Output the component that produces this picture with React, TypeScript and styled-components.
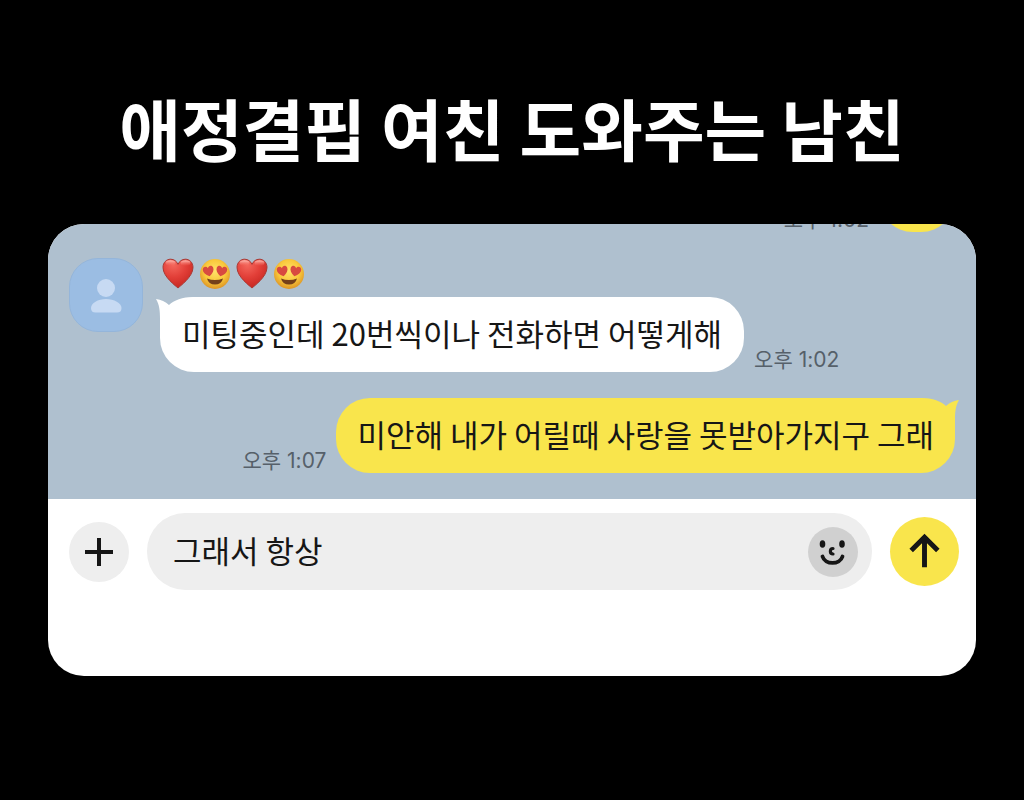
import React, { useState } from 'react';
import styled, { createGlobalStyle } from 'styled-components';

const GlobalStyle = createGlobalStyle`
  * { box-sizing: border-box; }
  body {
    margin: 0;
    background: #000;
    color: #161616;
    font-family: "Noto Sans CJK KR", sans-serif;
  }
`;

const Page = styled.main`
  padding: 79px 48px 124px;
`;

const Title = styled.h1`
  margin: 0 0 49px;
  color: #fff;
  font-size: 67px;
  font-weight: 600;
  line-height: 96px;
  text-align: center;
`;

const Phone = styled.section`
  overflow: hidden;
  border-radius: 36px;
  background: #fff;
`;

const Chat = styled.div`
  display: flex;
  flex-direction: column;
  gap: 26px;
  padding: 0 21px 26px;
  overflow: hidden;
  background: #afc0cf;
`;

const Row = styled.div<{ $mine?: boolean; $cut?: boolean }>`
  display: flex;
  align-items: flex-start;
  justify-content: ${(p) => (p.$mine ? 'flex-end' : 'flex-start')};
  gap: 17px;
  margin-top: ${(p) => (p.$cut ? '-67px' : '0')};
`;

const Avatar = styled.div`
  flex: none;
  width: 74px;
  height: 74px;
  border: 1px solid #94b5da;
  border-radius: 29px;
  background: #9bbde3;
`;

const Content = styled.div`
  display: flex;
  flex-direction: column;
  gap: 7px;
`;

const Name = styled.div`
  display: flex;
  gap: 5px;
  height: 32px;
  padding-left: 2px;
`;

const Line = styled.div`
  display: flex;
  align-items: flex-end;
  gap: 10px;
`;

const Bubble = styled.div<{ $mine?: boolean }>`
  position: relative;
  isolation: isolate;
  min-width: 76px;
  height: 75px;
  padding: 0 ${(p) => (p.$mine ? '21px' : '22px')};
  border-radius: 34px;
  background: ${(p) => (p.$mine ? '#f9e54c' : '#fff')};
  font-size: 31px;
  line-height: 72px;
  white-space: nowrap;
`;

const Tail = styled.svg<{ $mine?: boolean }>`
  position: absolute;
  z-index: -1;
  top: 0;
  ${(p) => (p.$mine ? 'right: -5px; transform: scaleX(-1);' : 'left: -5px;')}
  width: 40px;
  height: 36px;
`;

const Time = styled.time`
  color: #56606a;
  font-family: Inter, "Noto Sans CJK KR", sans-serif;
  font-size: 21px;
  line-height: 24px;
  white-space: nowrap;
`;

const Composer = styled.form`
  display: flex;
  align-items: center;
  gap: 18px;
  padding: 14px 17px 86px 21px;
`;

const RoundButton = styled.button<{ $size: number; $color: string }>`
  display: flex;
  flex: none;
  align-items: center;
  justify-content: center;
  width: ${(p) => p.$size}px;
  height: ${(p) => p.$size}px;
  padding: 0;
  border: 0;
  border-radius: 50%;
  background: ${(p) => p.$color};
`;

const Field = styled.div`
  display: flex;
  flex: 1;
  align-items: center;
  min-width: 0;
  height: 77px;
  padding: 0 14px 0 26px;
  border-radius: 38px;
  background: #eee;
`;

const TextInput = styled.input`
  flex: 1;
  min-width: 0;
  height: 52px;
  padding: 0 0 4px;
  border: 0;
  outline: 0;
  background: transparent;
  color: #161616;
  font-family: "Noto Sans CJK KR", sans-serif;
  font-size: 31px;
  line-height: 48px;
`;

const Heart = () => (
  <svg width="32" height="32" viewBox="0 0 32 32" role="img" aria-label="하트">
    <defs>
      <radialGradient id="heart" cx="0.35" cy="0.2" r="0.85">
        <stop offset="0" stopColor="#f4675c" />
        <stop offset="0.5" stopColor="#e23f38" />
        <stop offset="1" stopColor="#c4251f" />
      </radialGradient>
      <linearGradient id="gloss" x1="0" y1="0" x2="0" y2="1">
        <stop offset="0" stopColor="#ffc4ba" />
        <stop offset="1" stopColor="#f4675c" stopOpacity="0.1" />
      </linearGradient>
    </defs>
    <path
      d="M16 30C14.500 28.500 1 19 1 9.500C1 4.500 4.400 1.200 8.600 1.200C12 1.200 14.800 3.200 16 6.400C17.200 3.200 20 1.200 23.400 1.200C27.600 1.200 31 4.500 31 9.500C31 19 17.500 28.500 16 30Z"
      fill="url(#heart)"
      stroke="#a93a35"
      strokeWidth="1"
    />
    <ellipse cx="8.500" cy="5" rx="5" ry="2.800" fill="url(#gloss)" />
    <ellipse cx="23.500" cy="5" rx="5" ry="2.800" fill="url(#gloss)" />
  </svg>
);

const eyeHeart =
  'M0 5.400C-3.800 3 -5.800 0.300 -5.300 -2.500C-4.700 -5.400 -1.200 -5.700 0 -2.900C1.200 -5.700 4.700 -5.400 5.300 -2.500C5.800 0.300 3.800 3 0 5.400Z';

const HeartEyes = () => (
  <svg width="32" height="32" viewBox="0 0 32 32" role="img" aria-label="하트 눈 얼굴">
    <defs>
      <radialGradient id="face" cx="0.5" cy="0.4" r="0.6">
        <stop offset="0" stopColor="#ffe36a" />
        <stop offset="0.6" stopColor="#f9c83c" />
        <stop offset="1" stopColor="#dc9426" />
      </radialGradient>
    </defs>
    <circle cx="16" cy="16" r="15" fill="url(#face)" />
    <path d={eyeHeart} transform="translate(9.500 13) rotate(-12)" fill="#d84a40" />
    <path d={eyeHeart} transform="translate(22.500 13) rotate(12)" fill="#d84a40" />
    <path d="M8 20.500Q16 23.500 24 20.500Q22.500 26.500 16 26.500Q9.500 26.500 8 20.500Z" fill="#74401a" />
  </svg>
);

const BubbleTail = ({ mine }: { mine?: boolean }) => (
  <Tail $mine={mine} viewBox="0 0 40 36" aria-hidden="true">
    <path d="M0 0H39C27 0 19 3.500 14 8C10.500 5 6 3 1 2.500Z" fill="#afc0cf" />
    <path
      d="M1 2C6 2.500 10.500 4.500 14 8C19 3.500 27 0 39 0V36H5V22C5 14 4.500 8 1 2Z"
      fill={mine ? '#f9e54c' : '#fff'}
    />
  </Tail>
);

export default function App() {
  const [draft, setDraft] = useState('그래서 항상');

  return (
    <>
      <GlobalStyle />
      <Page>
        <Title>애정결핍 여친 도와주는 남친</Title>
        <Phone>
          <Chat>
            <Row $mine $cut>
              <Line>
                <Time>오후 1:02</Time>
                <Bubble $mine />
              </Line>
            </Row>
            <Row>
              <Avatar>
                <svg width="72" height="72" viewBox="0 0 72 72" aria-hidden="true">
                  <circle cx="36" cy="29" r="9" fill="#c7daf3" />
                  <path
                    d="M21 49C21 44 28 40 36 40C44 40 51.500 44 51.500 49C51.500 52 50 53.500 47 53.500H25.500C22.500 53.500 21 52 21 49Z"
                    fill="#c7daf3"
                  />
                </svg>
              </Avatar>
              <Content>
                <Name>
                  <Heart />
                  <HeartEyes />
                  <Heart />
                  <HeartEyes />
                </Name>
                <Line>
                  <Bubble>
                    <BubbleTail />
                    미팅중인데 20번씩이나 전화하면 어떻게해
                  </Bubble>
                  <Time>오후 1:02</Time>
                </Line>
              </Content>
            </Row>
            <Row $mine>
              <Line>
                <Time>오후 1:07</Time>
                <Bubble $mine>
                  <BubbleTail mine />
                  미안해 내가 어릴때 사랑을 못받아가지구 그래
                </Bubble>
              </Line>
            </Row>
          </Chat>
          <Composer onSubmit={(e) => e.preventDefault()}>
            <RoundButton type="button" $size={60} $color="#eee" aria-label="첨부">
              <svg width="30" height="30" viewBox="0 0 30 30" stroke="#161616" strokeWidth="4">
                <path d="M15 1V29M1 15H29" />
              </svg>
            </RoundButton>
            <Field>
              <TextInput
                aria-label="메시지 입력"
                value={draft}
                onChange={(e) => setDraft(e.target.value)}
              />
              <RoundButton type="button" $size={50} $color="#d0d0d0" aria-label="이모티콘">
                <svg width="50" height="50" viewBox="0 0 50 50" fill="none" stroke="#161616" strokeLinecap="round">
                  <ellipse cx="14.500" cy="17" rx="2.800" ry="3.800" fill="#161616" stroke="none" />
                  <ellipse cx="34" cy="17" rx="2.800" ry="3.800" fill="#161616" stroke="none" />
                  <path d="M25 21.500C21.500 21.500 21.500 27 25 27" strokeWidth="3.200" />
                  <path d="M14.500 29.500C17 38 32 38 34.500 29.500" strokeWidth="3.800" />
                </svg>
              </RoundButton>
            </Field>
            <RoundButton type="submit" $size={69} $color="#f9e54c" aria-label="보내기">
              <svg width="69" height="69" viewBox="0 0 70 70" fill="none" stroke="#161616" strokeWidth="5">
                <path d="M35 51V20M21.500 34L35 20.500L48.500 34" />
              </svg>
            </RoundButton>
          </Composer>
        </Phone>
      </Page>
    </>
  );
}
